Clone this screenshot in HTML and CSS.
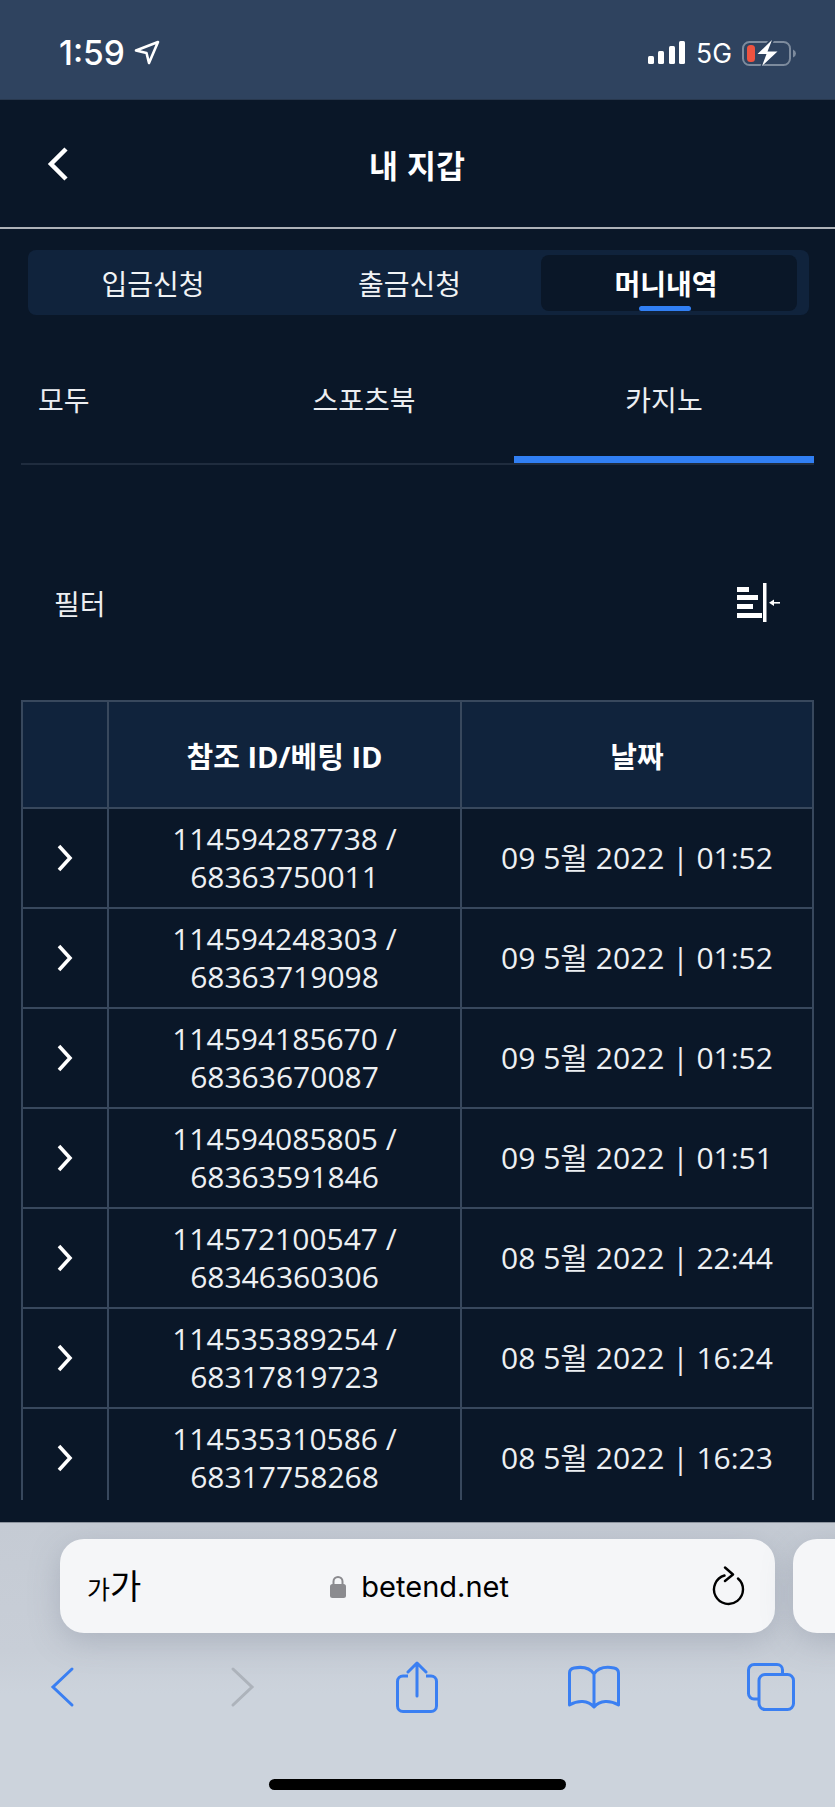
FILE: index.html
```html
<!DOCTYPE html>
<html lang="ko">
<head>
<meta charset="utf-8">
<title>내 지갑</title>
<link rel="stylesheet" href="styles.css">
</head>
<body>
  <div class="status-bar">
    <div class="status-left">
      <span class="time">1:59</span>
      <svg class="loc-icon" width="26" height="25" viewBox="0 0 26 25"><path d="M2 10.5 L24 2 L15 23 L12.5 13 Z" fill="none" stroke="#fff" stroke-width="2.6" stroke-linejoin="round"/></svg>
    </div>
    <div class="status-right">
      <svg width="37" height="23" viewBox="0 0 37 23" fill="#fff"><rect x="0" y="15" width="6" height="8" rx="1.5"/><rect x="10" y="10" width="6" height="13" rx="1.5"/><rect x="21" y="5" width="6" height="18" rx="1.5"/><rect x="31" y="0" width="6" height="23" rx="1.5"/></svg>
      <span class="net">5G</span>
      <svg width="55" height="28" viewBox="0 0 55 28"><rect x="1" y="3" width="47" height="23" rx="6.5" fill="none" stroke="#7d8b9d" stroke-width="2"/><rect x="5" y="6" width="8" height="17" rx="3.5" fill="#ee5340"/><path d="M51 10.5 Q54 12 54 14.5 Q54 17 51 18.5 Z" fill="#7d8b9d"/><path d="M29 -1 L13 16 L22 16 L18 29 L38 11 L28 11 L33 -1 Z" fill="#2f435f"/><path d="M30 1 L15.500 15 L24.500 15 L20 27 L35.500 12.500 L25.500 12.500 Z" fill="#fff"/></svg>
    </div>
  </div>

  <div class="main">
    <div class="header">
      <svg class="back-icon" width="24" height="36" viewBox="0 0 24 36"><path d="M20 3 L5 18 L20 33" fill="none" stroke="#fff" stroke-width="4.500"/></svg>
      <h1 class="title">내 지갑</h1>
      <span></span>
    </div>

    <div class="wallet-tabs">
      <div class="wallet-tab">입금신청</div>
      <div class="wallet-tab">출금신청</div>
      <div class="wallet-tab active">머니내역</div>
    </div>

    <div class="sub-tabs">
      <div class="sub-tab first">모두</div>
      <div class="sub-tab">스포츠북</div>
      <div class="sub-tab active">카지노</div>
    </div>

    <div class="filter-row">
      <span>필터</span>
      <svg width="43" height="39" viewBox="0 0 43 39" fill="#fff"><rect x="0" y="4" width="12" height="5"/><rect x="0" y="12" width="21" height="5"/><rect x="0" y="21" width="16" height="5"/><rect x="0" y="30" width="25" height="5"/><rect x="26" y="0" width="3.5" height="39"/><rect x="35" y="19" width="8" height="1.6"/><path d="M32 19.8 L37 16.5 L37 23 Z"/></svg>
    </div>

    <div class="table-wrap">
      <table class="money-table">
        <thead>
          <tr>
            <th class="col-arrow"></th>
            <th class="col-id">참조 ID/베팅 ID</th>
            <th>날짜</th>
          </tr>
        </thead>
        <tbody>
          <tr>
            <td><svg class="row-arrow" width="18" height="28" viewBox="0 0 18 28"><path d="M3 2 L14 14 L3 26" fill="none" stroke="#fff" stroke-width="3.6"/></svg></td>
            <td>114594287738 /<br>68363750011</td>
            <td>09 5월 2022 | 01:52</td>
          </tr>
          <tr>
            <td><svg class="row-arrow" width="18" height="28" viewBox="0 0 18 28"><path d="M3 2 L14 14 L3 26" fill="none" stroke="#fff" stroke-width="3.6"/></svg></td>
            <td>114594248303 /<br>68363719098</td>
            <td>09 5월 2022 | 01:52</td>
          </tr>
          <tr>
            <td><svg class="row-arrow" width="18" height="28" viewBox="0 0 18 28"><path d="M3 2 L14 14 L3 26" fill="none" stroke="#fff" stroke-width="3.6"/></svg></td>
            <td>114594185670 /<br>68363670087</td>
            <td>09 5월 2022 | 01:52</td>
          </tr>
          <tr>
            <td><svg class="row-arrow" width="18" height="28" viewBox="0 0 18 28"><path d="M3 2 L14 14 L3 26" fill="none" stroke="#fff" stroke-width="3.6"/></svg></td>
            <td>114594085805 /<br>68363591846</td>
            <td>09 5월 2022 | 01:51</td>
          </tr>
          <tr>
            <td><svg class="row-arrow" width="18" height="28" viewBox="0 0 18 28"><path d="M3 2 L14 14 L3 26" fill="none" stroke="#fff" stroke-width="3.6"/></svg></td>
            <td>114572100547 /<br>68346360306</td>
            <td>08 5월 2022 | 22:44</td>
          </tr>
          <tr>
            <td><svg class="row-arrow" width="18" height="28" viewBox="0 0 18 28"><path d="M3 2 L14 14 L3 26" fill="none" stroke="#fff" stroke-width="3.6"/></svg></td>
            <td>114535389254 /<br>68317819723</td>
            <td>08 5월 2022 | 16:24</td>
          </tr>
          <tr>
            <td><svg class="row-arrow" width="18" height="28" viewBox="0 0 18 28"><path d="M3 2 L14 14 L3 26" fill="none" stroke="#fff" stroke-width="3.6"/></svg></td>
            <td>114535310586 /<br>68317758268</td>
            <td>08 5월 2022 | 16:23</td>
          </tr>
        </tbody>
      </table>
    </div>
  </div>

  <div class="browser">
    <div class="url-row">
      <div class="url-bar">
        <span class="aa"><small>가</small>가</span>
        <span class="address">
          <svg width="16" height="23" viewBox="0 0 16 23"><path d="M3.500 10 V6.500 A4.500 4.500 0 0 1 12.500 6.500 V10" fill="none" stroke="#8b8b8f" stroke-width="2"/><rect x="0" y="9" width="16" height="14" rx="2.500" fill="#8b8b8f"/></svg>
          betend.net
        </span>
        <svg width="34" height="40" viewBox="0 0 34 40"><path d="M12.500 9.500 A14.500 14.500 0 1 0 26 12.500" fill="none" stroke="#000" stroke-width="2.400" stroke-linecap="round"/><path d="M13 1.500 L21 8.500 L13 15" fill="none" stroke="#000" stroke-width="2.400" stroke-linecap="round" stroke-linejoin="round"/></svg>
      </div>
      <div class="url-bar next"></div>
    </div>
    <div class="toolbar">
      <div class="tool"><svg width="26" height="42" viewBox="0 0 26 42"><path d="M23 3 L4 21 L23 39" fill="none" stroke="#3a7ff2" stroke-width="3" stroke-linecap="round"/></svg></div>
      <div class="tool forward"><svg width="26" height="42" viewBox="0 0 26 42"><path d="M3 3 L22 21 L3 39" fill="none" stroke="#adb3bb" stroke-width="3" stroke-linecap="round"/></svg></div>
      <div class="tool"><svg width="42" height="52" viewBox="0 0 42 52"><path d="M12 15 H7 A5.500 5.500 0 0 0 1.500 20.500 V45 A5.500 5.500 0 0 0 7 50.500 H35 A5.500 5.500 0 0 0 40.500 45 V20.500 A5.500 5.500 0 0 0 35 15 H30" fill="none" stroke="#3a7ff2" stroke-width="3"/><path d="M21 35 V3 M12 11 L21 2 L30 11" fill="none" stroke="#3a7ff2" stroke-width="3" stroke-linecap="round" stroke-linejoin="round"/></svg></div>
      <div class="tool"><svg width="52" height="44" viewBox="0 0 52 44"><path d="M26 9 C22 3 14 1.500 6 3 C3.500 3.500 1.500 5.500 1.500 8 V40 C10 35 20 35 26 42 C32 35 42 35 50.500 40 V8 C50.500 5.500 48.500 3.500 46 3 C38 1.500 30 3 26 9 Z M26 9 V42" fill="none" stroke="#3a7ff2" stroke-width="3" stroke-linejoin="round"/></svg></div>
      <div class="tool"><svg width="48" height="48" viewBox="0 0 48 48"><path d="M11 36 H7 A5.500 5.500 0 0 1 1.500 30.500 V7 A5.500 5.500 0 0 1 7 1.500 H30 A5.500 5.500 0 0 1 35.500 7 V11" fill="none" stroke="#3a7ff2" stroke-width="3"/><rect x="12" y="11.500" width="34.500" height="35" rx="6" fill="none" stroke="#3a7ff2" stroke-width="3"/></svg></div>
    </div>
    <div class="home-bar"></div>
  </div>
</body>
</html>
```

FILE: styles.css
```css
* {
  box-sizing: border-box;
}

html, body {
  margin: 0;
  padding: 0;
}

body {
  width: 835px;
  height: 1807px;
  overflow: hidden;
  display: flex;
  flex-direction: column;
  background-color: #0a1728;
  color: #fff;
  font-family: "Open Sans", "Noto Sans CJK KR", sans-serif;
}

.status-bar {
  height: 100px;
  flex: none;
  display: flex;
  justify-content: space-between;
  align-items: center;
  padding: 6px 38px 0 59px;
  background-color: #2f435f;
  border-bottom: 1px solid #29394f;
}

.status-left,
.status-right {
  display: flex;
  align-items: center;
}

.time {
  font-family: Inter, sans-serif;
  font-size: 33.500px;
  font-weight: 500;
  line-height: 36px;
}

.loc-icon {
  margin-left: 9px;
}

.net {
  font-family: Inter, sans-serif;
  font-size: 26.500px;
  margin: 0 10px 0 11px;
  line-height: 30px;
}

.main {
  height: 1422px;
  flex: none;
  display: flex;
  flex-direction: column;
  padding-bottom: 22px;
  overflow: hidden;
}

.header {
  height: 129px;
  flex: none;
  display: grid;
  grid-template-columns: 1fr auto 1fr;
  align-items: center;
  padding: 0 46px;
  border-bottom: 2px solid #aeb2b8;
}

.title {
  margin: 0 0 0 -1px;
  font-size: 31.500px;
  font-weight: 700;
  font-family: "Noto Sans CJK KR", sans-serif;
  line-height: 40px;
}

.wallet-tabs {
  flex: none;
  display: grid;
  grid-template-columns: 250px 263px 256px;
  height: 65px;
  margin: 21px 26px 0 28px;
  padding: 5px 12px 4px 0;
  background-color: #10233c;
  border-radius: 8px;
}

.wallet-tab {
  position: relative;
  display: flex;
  align-items: center;
  justify-content: center;
  font-size: 28px;
  color: #f1f3f5;
}

.wallet-tab.active {
  padding-right: 6px;
  background-color: #0a1728;
  border-radius: 8px;
  font-weight: 700;
  color: #fff;
}

.wallet-tab.active::after {
  content: "";
  position: absolute;
  left: 98px;
  bottom: 0;
  width: 52px;
  height: 5px;
  border-radius: 3px;
  background-color: #317ff3;
}

.sub-tabs {
  flex: none;
  display: grid;
  grid-template-columns: 193px 300px 300px;
  margin: 27px 21px 0;
  border-bottom: 2px solid #1f2c3e;
}

.sub-tab {
  height: 121px;
  display: flex;
  align-items: center;
  justify-content: center;
  border-bottom: 7px solid transparent;
  font-size: 28px;
  color: #eceef1;
}

.sub-tab.first {
  justify-content: flex-start;
  padding-left: 17px;
}

.sub-tab.active {
  border-bottom-color: #317ff3;
}

.filter-row {
  flex: none;
  height: 39px;
  margin-top: 118px;
  padding: 0 55px 0 54px;
  display: flex;
  justify-content: space-between;
  align-items: center;
  font-size: 28px;
  color: #eceef1;
}

.table-wrap {
  flex: 1;
  min-height: 0;
  margin-top: 78px;
  padding: 0 21px;
  overflow: hidden;
}

.money-table {
  width: 793px;
  table-layout: fixed;
  border-collapse: collapse;
  text-align: center;
}

.money-table th,
.money-table td {
  border: 2px solid #38485d;
  padding: 0;
}

.money-table th {
  height: 107px;
  background-color: #10233c;
  font-size: 29px;
  font-weight: 700;
}

.col-arrow {
  width: 86px;
}

.col-id {
  width: 353px;
}

.money-table td {
  height: 100px;
  font-size: 30px;
  line-height: 38px;
  color: #edf0f3;
}

.row-arrow {
  display: block;
  margin: 0 0 0 33px;
}

.browser {
  flex: 1;
  display: flex;
  flex-direction: column;
  background: linear-gradient(#c5cbd4, #c8ced7 45%, #ccd3dc 60%);
  border-top: 1px solid #8d949e;
  overflow: hidden;
}

.url-row {
  flex: none;
  display: flex;
  gap: 18px;
  margin-top: 16px;
  padding-left: 60px;
}

.url-bar {
  flex: none;
  width: 715px;
  height: 94px;
  display: flex;
  align-items: center;
  justify-content: space-between;
  padding: 0 29px 0 27px;
  background-color: #f5f6f8;
  border-radius: 24px;
  box-shadow: 0 8px 30px rgba(120, 130, 145, 0.35);
  color: #000;
}

.aa {
  font-family: "Noto Sans CJK KR", sans-serif;
  font-size: 34px;
  line-height: 40px;
}

.aa small {
  font-size: 25px;
}

.address {
  display: flex;
  align-items: center;
  gap: 15px;
  margin-right: 14px;
  font-family: Inter, sans-serif;
  font-size: 29px;
}

.toolbar {
  flex: none;
  display: flex;
  justify-content: space-between;
  margin-top: 24px;
  padding: 0 34px 0 32px;
}

.tool {
  width: 60px;
  height: 60px;
  display: flex;
  align-items: center;
  justify-content: center;
}

.tool.forward {
  padding-left: 8px;
}

.home-bar {
  flex: none;
  width: 297px;
  height: 11px;
  margin: 62px auto 0;
  border-radius: 6px;
  background-color: #000;
}
```
